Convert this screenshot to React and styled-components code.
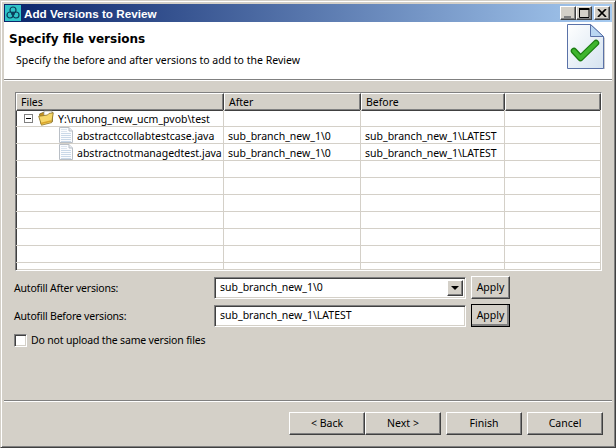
import styled, { createGlobalStyle, css } from "styled-components";

const GlobalStyle = createGlobalStyle`
  html, body { margin: 0; padding: 0; background: #d4d0c8; }
  * { box-sizing: border-box; }
`;

const raised = css`
  background: #d4d0c8;
  border: 1px solid;
  border-color: #ffffff #404040 #404040 #ffffff;
  box-shadow: inset -1px -1px 0 #808080, inset 1px 1px 0 #d4d0c8;
`;

const sunken = css`
  background: #fff;
  border: 1px solid;
  border-color: #808080 #fff #fff #808080;
  box-shadow: inset 1px 1px 0 #404040, inset -1px -1px 0 #d4d0c8;
`;

const Window = styled.div`
  width: 616px;
  height: 448px;
  display: flex;
  flex-direction: column;
  padding: 3px;
  background: #d4d0c8;
  border: 1px solid;
  border-color: #d4d0c8 #404040 #404040 #d4d0c8;
  box-shadow: inset 1px 1px 0 #fff, inset -1px -1px 0 #808080;
  font-family: "Noto Sans", Tahoma, sans-serif;
  font-size: 10.5px;
  color: #000;
  overflow: hidden;
`;

const TitleBar = styled.div`
  height: 18px;
  flex: none;
  display: flex;
  align-items: center;
  padding: 0 2px 0 1px;
  background: linear-gradient(90deg, #0a246a, #a6caf0);
  color: #fff;
  font-family: "Liberation Sans", Arial, sans-serif;
  font-weight: bold;
  font-size: 11.7px;
`;

const AppIcon = styled.svg`
  width: 16px;
  height: 16px;
  margin-right: 3px;
`;

const TitleText = styled.span`
  flex: 1;
`;

const CaptionButton = styled.div`
  ${raised}
  width: 16px;
  height: 14px;
  margin-left: ${(p) => p.$gap || 0}px;
  display: flex;
  align-items: center;
  justify-content: center;
`;

const Banner = styled.div`
  height: 58px;
  flex: none;
  display: flex;
  justify-content: space-between;
  background: #fff;
  border-bottom: 1px solid #808080;
  box-shadow: 0 1px 0 #fff;
`;

const BannerText = styled.div`
  padding: 9px 0 0 5px;
`;

const Heading = styled.div`
  font-family: "DejaVu Sans", Verdana, sans-serif;
  font-weight: bold;
  font-size: 12px;
  line-height: 16px;
`;

const SubHeading = styled.div`
  margin: 6px 0 0 7px;
  line-height: 14px;
`;

const BannerIcon = styled.svg`
  width: 40px;
  height: 46px;
  margin: 2px 5px 0 0;
`;

const Body = styled.div`
  flex: 1;
  display: flex;
  flex-direction: column;
  padding: 12px 10px 0 10px;
`;

const Table = styled.div`
  ${sunken}
  width: 587px;
  height: 179px;
  margin-left: 1px;
  overflow: hidden;
`;

const columns = "208px 137px 144px 1fr";

const HeaderRow = styled.div`
  display: grid;
  grid-template-columns: ${columns};
  height: 17px;
`;

const HeaderCell = styled.div`
  ${raised}
  padding: 1px 0 0 4px;
  line-height: 15px;
`;

const Row = styled.div`
  display: grid;
  grid-template-columns: ${columns};
  height: 17px;
  border-bottom: 1px solid #d4d0c8;
`;

const Cell = styled.div`
  display: flex;
  align-items: center;
  padding-left: ${(p) => p.$indent || 4}px;
  border-right: 1px solid #d4d0c8;
  white-space: nowrap;
`;

const CellText = styled.span`
  padding-top: 2px;
`;

const Expander = styled.div`
  width: 9px;
  height: 9px;
  border: 1px solid #808080;
  display: flex;
  align-items: center;
  justify-content: center;
  margin-right: 5px;
  &::after {
    content: "";
    width: 5px;
    height: 1px;
    background: #000;
  }
`;

const TreeIcon = styled.svg`
  width: 16px;
  height: 16px;
  margin-right: ${(p) => p.$gap}px;
  flex: none;
`;

const FormRow = styled.div`
  display: flex;
  align-items: center;
  height: 23px;
  margin-top: 5px;
`;

const Label = styled.div`
  width: 200px;
  flex: none;
  letter-spacing: -0.2px;
`;

const Field = styled.div`
  ${sunken}
  width: 252px;
  height: 22px;
  display: flex;
  align-items: center;
  justify-content: space-between;
  padding: 0 2px 2px 5px;
`;

const DropButton = styled.div`
  ${raised}
  width: 16px;
  height: 16px;
  margin-bottom: -2px;
  display: flex;
  align-items: center;
  justify-content: center;
  &::after {
    content: "";
    border: 4px solid transparent;
    border-top: 4px solid #000;
    border-bottom: 0;
  }
`;

const ApplyButton = styled.div`
  ${raised}
  width: 39px;
  height: 23px;
  margin-left: 5px;
  padding-bottom: 2px;
  display: flex;
  align-items: center;
  justify-content: center;
  ${(p) =>
    p.$default &&
    css`
      outline: 1px solid #000;
      outline-offset: -1px;
      box-shadow: inset -2px -2px 0 #808080;
    `}
`;

const CheckRow = styled.div`
  display: flex;
  align-items: center;
  margin-top: 6px;
  letter-spacing: -0.17px;
`;

const CheckBox = styled.div`
  ${sunken}
  width: 13px;
  height: 13px;
  margin-right: 4px;
`;

const Footer = styled.div`
  height: 44px;
  flex: none;
  border-top: 1px solid #808080;
  box-shadow: inset 0 1px 0 #fff;
  display: flex;
  justify-content: flex-end;
  padding: 11px 9px 0 0;
`;

const NavButton = styled.div`
  ${raised}
  width: 76px;
  height: 23px;
  margin-left: ${(p) => p.$gap}px;
  padding-bottom: 2px;
  display: flex;
  align-items: center;
  justify-content: center;
`;

const rows = [
  { name: "abstractccollabtestcase.java", after: "sub_branch_new_1\\0", before: "sub_branch_new_1\\LATEST" },
  { name: "abstractnotmanagedtest.java", after: "sub_branch_new_1\\0", before: "sub_branch_new_1\\LATEST" },
];

function FileIcon() {
  return (
    <TreeIcon viewBox="0 0 16 16" $gap={2}>
      <path d="M.5.5h9.5l3.5 3.5v11.5H.5z" fill="#fbfcfe" stroke="#b9bfc6" />
      <path d="M10 .5V4h3.5" fill="#e8ecf2" stroke="#b9bfc6" />
      <path d="M2 6.5h10M2 8.5h10M2 10.5h10M2 12.5h10M2 14.5h10" stroke="#c9d8e8" />
      <path d="M2 2.5h6M2 4.5h6" stroke="#dbe4ee" />
    </TreeIcon>
  );
}

function FolderIcon() {
  return (
    <TreeIcon viewBox="0 0 16 16" $gap={4}>
      <path d="M1.5 4 5 2.5h9.5v9L3 14z" fill="#c8931e" stroke="#7d6a2a" strokeWidth=".8" />
      <path d="M6 1h8v9.5H6z" fill="#fff" stroke="#9a9a88" strokeWidth=".7" />
      <path d="M.7 6.3 9.5 5l1.5-1.6 4.3-.6-1.6 9.8-10.2 2.6z" fill="#f7d768" stroke="#8c7120" strokeWidth=".8" />
      <path d="M3 13.5 13 11" stroke="#d9a42a" strokeWidth="1.4" />
    </TreeIcon>
  );
}

export default function App() {
  return (
    <>
      <GlobalStyle />
      <Window>
        <TitleBar>
          <AppIcon viewBox="0 0 16 16">
            <rect width="16" height="16" fill="#30c4c8" />
            <g fill="none" stroke="#0c3f5c" strokeWidth="1.2">
              <circle cx="8" cy="5" r="3" />
              <circle cx="5" cy="10" r="3" />
              <circle cx="11" cy="10" r="3" />
              <circle cx="8" cy="8.5" r="1.4" />
            </g>
          </AppIcon>
          <TitleText>Add Versions to Review</TitleText>
          <CaptionButton>
            <svg width="10" height="10" viewBox="0 0 10 10">
              <path d="M1 9h7" stroke="#808080" strokeWidth="2" />
            </svg>
          </CaptionButton>
          <CaptionButton>
            <svg width="11" height="10" viewBox="0 0 11 10">
              <path d="M.5 1.5h9.5v8H.5z" fill="none" stroke="#000" />
              <path d="M0 1h10.5" stroke="#000" strokeWidth="2" />
            </svg>
          </CaptionButton>
          <CaptionButton $gap={2}>
            <svg width="10" height="8" viewBox="0 0 10 8">
              <path d="M1 0l8 8M9 0 1 8" stroke="#000" strokeWidth="1.7" />
            </svg>
          </CaptionButton>
        </TitleBar>

        <Banner>
          <BannerText>
            <Heading>Specify file versions</Heading>
            <SubHeading>Specify the before and after versions to add to the Review</SubHeading>
          </BannerText>
          <BannerIcon viewBox="0 0 40 46">
            <defs>
              <linearGradient id="page" x1="0" y1="0" x2="1" y2="1">
                <stop offset="0" stopColor="#ffffff" />
                <stop offset="1" stopColor="#d5e3f0" />
              </linearGradient>
            </defs>
            <path d="M3 2h22l13 12v31H3z" fill="#9a9a9a" opacity=".5" />
            <path d="M.5.5h23l13 12v32H.5z" fill="url(#page)" stroke="#5a72a8" />
            <path d="M23.5.5v12h13z" fill="#b9d6f2" stroke="#5a72a8" />
            <path d="M7 27l6.5 7L29 19" fill="none" stroke="#1c7d12" strokeWidth="6.5" strokeLinecap="round" strokeLinejoin="round" />
            <path d="M7 27l6.5 7L29 19" fill="none" stroke="#3fb52e" strokeWidth="4" strokeLinecap="round" strokeLinejoin="round" />
          </BannerIcon>
        </Banner>

        <Body>
          <Table>
            <HeaderRow>
              <HeaderCell>Files</HeaderCell>
              <HeaderCell>After</HeaderCell>
              <HeaderCell>Before</HeaderCell>
              <HeaderCell />
            </HeaderRow>
            <Row>
              <Cell $indent={8}>
                <Expander />
                <FolderIcon />
                <CellText>Y:\ruhong_new_ucm_pvob\test</CellText>
              </Cell>
              <Cell />
              <Cell />
              <Cell />
            </Row>
            {rows.map((row) => (
              <Row key={row.name}>
                <Cell $indent={43}>
                  <FileIcon />
                  <CellText>{row.name}</CellText>
                </Cell>
                <Cell>
                  <CellText>{row.after}</CellText>
                </Cell>
                <Cell>
                  <CellText>{row.before}</CellText>
                </Cell>
                <Cell />
              </Row>
            ))}
            {[0, 1, 2, 3, 4, 5, 6].map((i) => (
              <Row key={i}>
                <Cell />
                <Cell />
                <Cell />
                <Cell />
              </Row>
            ))}
          </Table>

          <FormRow>
            <Label>Autofill After versions:</Label>
            <Field>
              sub_branch_new_1\0
              <DropButton />
            </Field>
            <ApplyButton>Apply</ApplyButton>
          </FormRow>
          <FormRow>
            <Label>Autofill Before versions:</Label>
            <Field>sub_branch_new_1\LATEST</Field>
            <ApplyButton $default>Apply</ApplyButton>
          </FormRow>
          <CheckRow>
            <CheckBox />
            Do not upload the same version files
          </CheckRow>
        </Body>

        <Footer>
          <NavButton>&lt; Back</NavButton>
          <NavButton>Next &gt;</NavButton>
          <NavButton $gap={5}>Finish</NavButton>
          <NavButton $gap={5}>Cancel</NavButton>
        </Footer>
      </Window>
    </>
  );
}
